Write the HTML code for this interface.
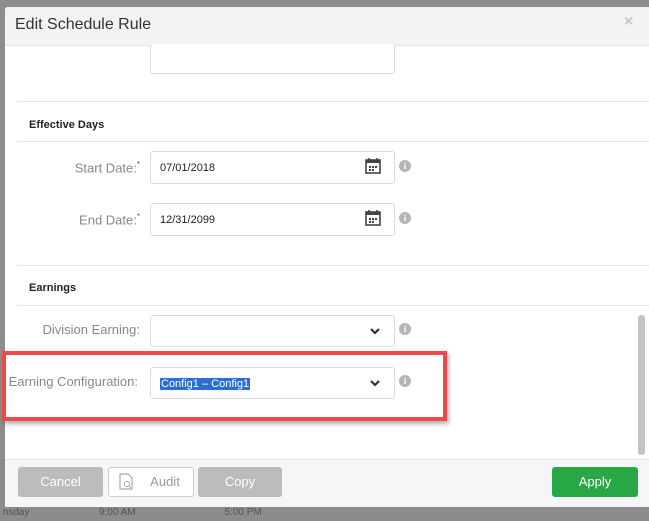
<!DOCTYPE html>
<html><head><meta charset="utf-8"><style>
body{margin:0;width:649px;height:513px;background:#8c8c8c;position:relative;overflow:hidden;font-family:"Liberation Sans",sans-serif;}
.a{position:absolute}
.modal{left:5px;top:7px;width:644px;height:499px;background:#fff;border-radius:3px 0 0 0;overflow:hidden}
.hdr{left:0;top:0;width:644px;height:38px;background:#f1f3f5;border-bottom:1px solid #e2e4e6}
.inp{background:#fff;border:1px solid #dcdcdc;border-radius:3px;height:31px;width:245px;left:150px;box-sizing:border-box;font-size:11px;color:#222;line-height:31px;padding-left:9px}
.lbl{font-size:13px;color:#888;text-align:right;width:140px;left:0;white-space:nowrap}
.line{height:1px;background:#e6e6e6;left:17px;width:632px}
.sec{font-size:11px;font-weight:bold;color:#222;left:29px}
.btn{height:30px;border-radius:3px;font-size:13px;color:#fff;text-align:center;line-height:30px}
.info{width:12px;height:12px;border-radius:50%;background:#b5b5b5;color:#fff;font-size:9px;font-weight:bold;text-align:center;line-height:12px;font-family:"Liberation Serif",serif}
</style></head><body>
<div class="a" style="left:0;top:505px;width:649px;height:8px;font-size:10px;color:#555;line-height:16px;white-space:nowrap">&nbsp;nsday&nbsp;&nbsp;&nbsp;&nbsp;&nbsp;&nbsp;&nbsp;&nbsp;&nbsp;&nbsp;&nbsp;&nbsp;&nbsp;&nbsp;&nbsp;&nbsp;&nbsp;&nbsp;&nbsp;&nbsp;&nbsp;&nbsp;&nbsp;&nbsp;&nbsp;9:00 AM&nbsp;&nbsp;&nbsp;&nbsp;&nbsp;&nbsp;&nbsp;&nbsp;&nbsp;&nbsp;&nbsp;&nbsp;&nbsp;&nbsp;&nbsp;&nbsp;&nbsp;&nbsp;&nbsp;&nbsp;&nbsp;&nbsp;&nbsp;&nbsp;&nbsp;&nbsp;&nbsp;&nbsp;&nbsp;&nbsp;&nbsp;&nbsp;5:00 PM</div>
<div class="a modal">
 <div class="a hdr"></div>
 <div class="a" style="left:10px;top:9px;font-size:16px;color:#333">Edit Schedule Rule</div>
 <div class="a" style="left:619px;top:6px;font-size:16px;color:#c4c4c4;font-weight:bold">×</div>
</div>
<div class="a inp" style="top:44px;height:30px;border-top:none"></div>
<div class="a line" style="top:101px"></div>
<div class="a sec" style="top:119px">Effective Days</div>
<div class="a line" style="top:141px"></div>

<div class="a lbl" style="top:160px">Start Date:<sup style="font-size:8px;color:#555">*</sup></div>
<div class="a inp" style="top:151px;height:33px;line-height:33px">07/01/2018</div>
<div class="a lbl" style="top:212px">End Date:<sup style="font-size:8px;color:#555">*</sup></div>
<div class="a inp" style="top:203px;height:33px;line-height:33px">12/31/2099</div>
<svg class="a" style="left:364px;top:157px" width="18" height="18" viewBox="0 0 18 18"><rect x="2" y="3" width="14" height="13" fill="none" stroke="#444" stroke-width="1.6"/><rect x="2" y="3" width="14" height="3" fill="#444"/><path d="M5 1v4M13 1v4" stroke="#444" stroke-width="1.6"/><path d="M5 9h2v2H5zM8 9h2v2H8zM11 9h2v2h-2zM5 12h2v2H5zM8 12h2v2H8z" fill="#444"/></svg>
<svg class="a" style="left:364px;top:209px" width="18" height="18" viewBox="0 0 18 18"><rect x="2" y="3" width="14" height="13" fill="none" stroke="#444" stroke-width="1.6"/><rect x="2" y="3" width="14" height="3" fill="#444"/><path d="M5 1v4M13 1v4" stroke="#444" stroke-width="1.6"/><path d="M5 9h2v2H5zM8 9h2v2H8zM11 9h2v2h-2zM5 12h2v2H5zM8 12h2v2H8z" fill="#444"/></svg>
<div class="a info" style="left:399px;top:160px">i</div>
<div class="a info" style="left:399px;top:212px">i</div>

<div class="a line" style="top:265px"></div>
<div class="a sec" style="top:282px">Earnings</div>
<div class="a line" style="top:305px"></div>

<div class="a lbl" style="top:322px">Division Earning:</div>
<div class="a inp" style="top:315px;height:32px"></div>
<div class="a lbl" style="top:374px;width:138px">Earning Configuration:</div>
<div class="a inp" style="top:367px;height:32px;line-height:32px"><span style="background:#2b6fd6;color:#fff;padding:0 1px">Config1 – Config1</span></div>
<svg class="a" style="left:369px;top:327px" width="12" height="10"><path d="M2 2l4 4 4-4" fill="none" stroke="#333" stroke-width="2.2"/></svg>
<svg class="a" style="left:369px;top:379px" width="12" height="10"><path d="M2 2l4 4 4-4" fill="none" stroke="#333" stroke-width="2.2"/></svg>
<div class="a info" style="left:399px;top:323px">i</div>
<div class="a info" style="left:399px;top:375px">i</div>
<div class="a" style="left:2px;top:351px;width:437px;height:62px;border:4px solid #f04848;box-shadow:2px 3px 4px rgba(0,0,0,.3)"></div>

<div class="a" style="left:638px;top:315px;width:7px;height:140px;background:#c3c3c3;border-radius:3px"></div>
<div class="a" style="left:5px;top:459px;width:644px;height:47px;background:#f5f6f8;border-top:1px solid #e3e3e3"></div>
<div class="a btn" style="left:18px;top:467px;width:85px;background:#bcbcbc">Cancel</div>
<div class="a btn" style="left:108px;top:467px;width:86px;background:#fff;border:1px solid #ccc;box-sizing:border-box;color:#999;line-height:28px"><svg style="position:absolute;left:10px;top:5px" width="14" height="17"><path d="M1 1h8l4 4v11H1z" fill="none" stroke="#aaa" stroke-width="1.2"/><circle cx="8" cy="11" r="2.5" fill="none" stroke="#aaa"/><path d="M10 13l2 2" stroke="#aaa"/></svg><span style="margin-left:28px">Audit</span></div>
<div class="a btn" style="left:198px;top:467px;width:84px;background:#bcbcbc">Copy</div>
<div class="a btn" style="left:552px;top:467px;width:86px;background:#28a745">Apply</div>
</body></html>
